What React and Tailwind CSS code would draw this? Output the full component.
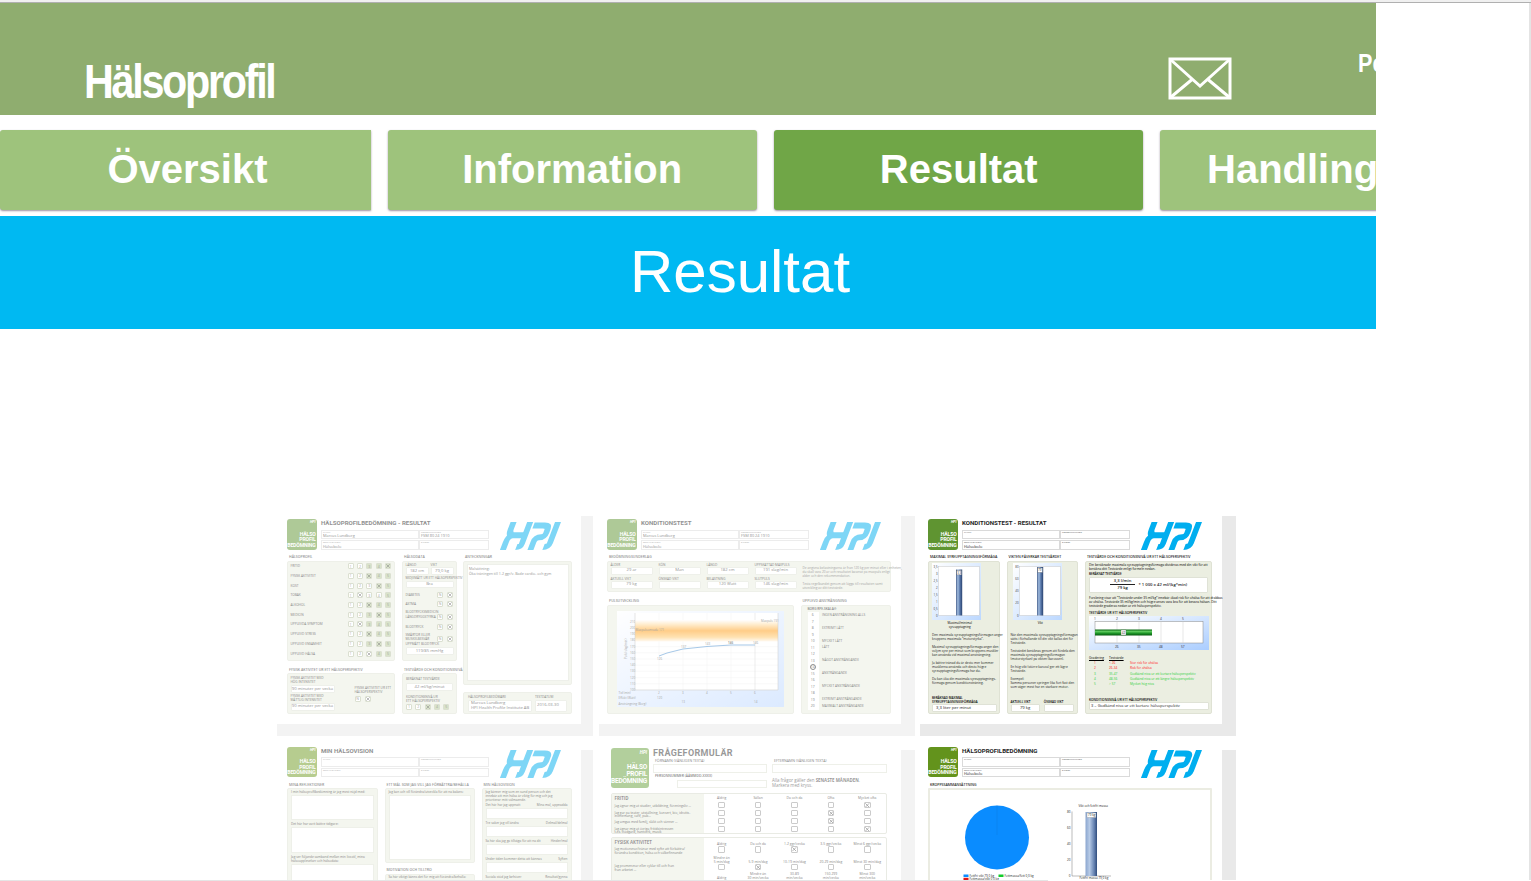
import React from "react";

const cx = (...parts) => parts.filter(Boolean).join(" ");

/* ---------- small building blocks ---------- */

const T = ({ className, children }) => (
  <div className={cx("h-[4px] shrink-0 whitespace-nowrap text-[3.2px] leading-[4px]", className)}>{children}</div>
);

const Head = ({ className, children }) => (
  <div className={cx("h-[5.5px] shrink-0 whitespace-nowrap pl-[2px] text-[3.5px] font-semibold leading-[4px] text-[#222]", className)}>
    {children}
  </div>
);

const Panel = ({ className, children }) => (
  <div className={cx("flex shrink-0 flex-col rounded-[2px] border border-[#dfe2d4] bg-[#ebeee1]", className)}>{children}</div>
);

const Value = ({ className, children }) => (
  <div className={cx("flex shrink-0 items-center justify-center whitespace-nowrap rounded-[1px] border-[0.5px] border-[#dfe2d6] bg-white text-[4.2px] leading-none text-[#222]", className)}>
    {children}
  </div>
);

const Cross = () => (
  <svg viewBox="0 0 8 8" className="h-full w-full">
    <path d="M0.6 0.6 7.4 7.4M7.4 0.6 0.6 7.4" stroke="#222" strokeWidth="1.2" fill="none" />
  </svg>
);

const Cell = ({ n, green, crossed }) => (
  <div
    className={cx(
      "flex h-[6px] w-[6px] shrink-0 items-center justify-center rounded-[1px] border border-[#b9c2a4] text-[3.5px] leading-none text-[#444]",
      green ? "bg-[#b4c896]" : "bg-white"
    )}
  >
    {crossed ? <Cross /> : n}
  </div>
);

const YesNo = ({ label, className }) => (
  <div className={cx("flex h-[6px] shrink-0 items-center justify-between pr-[3px]", className)}>
    <T>{label}</T>
    <div className="flex gap-[3.5px]">
      <Cell n="N" />
      <Cell crossed />
    </div>
  </div>
);

const HpiLogo = ({ className }) => (
  <svg viewBox="0 0 184 84" className={cx("h-[28px] w-[61px] shrink-0", className)} fill="none" stroke="#00aeef" strokeWidth="18">
    <g transform="translate(32 0) skewX(-21)">
      <path d="M9 0V22Q9 40 24 40H60M9 84V60Q9 40 26 40" />
      <path d="M59 0V66Q59 75 46 75" />
      <path d="M73 10H104Q120 10 120 22V32Q120 46 106 46H106Q92 46 92 60V84" />
      <path d="M143 0V64Q143 75 128 75" />
    </g>
  </svg>
);

const Badge = ({ className, text, mark, color }) => (
  <div className={cx("flex shrink-0 flex-col items-end rounded-[3px] font-['Roboto'] font-bold text-white", color, className)}>
    <div className={cx("italic leading-none", mark)}>HPI</div>
    <div className={cx("mt-auto text-right", text)}>
      <div>HÄLSO</div>
      <div>PROFIL</div>
      <div>BEDÖMNING</div>
    </div>
  </div>
);

const Field = ({ label, value, className }) => (
  <div className={cx("flex h-[9.5px] flex-col border-[0.5px] border-[#dadada] pl-[1px]", className)}>
    <div className="h-[3.5px] whitespace-nowrap text-[2.4px] leading-[3.5px] text-[#555]">{label}</div>
    <div className="whitespace-nowrap text-[3.9px] leading-[4px] text-[#222]">{value}</div>
  </div>
);

const DocHeader = ({ title, name, number, org, logo = "bg-[#5f9431]" }) => (
  <div className="flex h-[36px] shrink-0">
    <Badge className="h-[30.5px] w-[30px] px-[1.5px] pb-[1px] pt-[2px]" text="text-[5.1px] leading-[5.6px] tracking-[-0.15px]" mark="text-[3.5px]" color={logo} />
    <div className="ml-[4px] flex w-[168px] flex-col">
      <div className="h-[10.5px] whitespace-nowrap font-['Roboto'] text-[6.1px] font-bold leading-[7.5px] text-[#1d1d1d]">{title}</div>
      <div className="grid grid-cols-[98px_70px] gap-y-[1px]">
        <Field label="NAMN" value={name} />
        <Field label="PERSONNUMMER" value={number} />
        <Field label="ORGANISATION" value={org} />
        <Field label="E-POST" />
      </div>
    </div>
    <HpiLogo className="ml-[11px] mt-[3px]" />
  </div>
);

const Thumb = ({ faded, first, lower, children }) => (
  <div className={cx("flex h-[221px] w-[316px] shrink-0", faded && "opacity-50")}>
    <div className={cx("flex w-full flex-col", lower ? "pt-[7px]" : "pt-[0.5px]")}>
      <div className="w-full grow bg-[#e9e9e9]">
        <div className={cx("flex flex-col bg-white pt-[4px] font-['Open_Sans']", lower ? "-mt-[7px] h-[208px]" : "-mt-[0.5px] h-[208.5px]", first ? "w-[304px] pl-[10px]" : "w-[302px] pl-[8px]")}>
          {children}
        </div>
      </div>
    </div>
  </div>
);

/* ---------- document 1: result ---------- */

const profile = [
  ["FRITID", 5, 3],
  ["FYSISK AKTIVITET", 3, 3],
  ["KOST", 4, 4],
  ["TOBAK", 2, 5],
  ["ALKOHOL", 3, 3],
  ["MEDICIN", 4, 3],
  ["UPPLEVDA SYMPTOM", 2, 3],
  ["UPPLEVD STRESS", 3, 3],
  ["UPPLEVD ENSAMHET", 4, 3],
  ["UPPLEVD HÄLSA", 3, 4],
];

const DocResult = () => (
  <>
    <DocHeader title="HÄLSOPROFILBEDÖMNING - RESULTAT" name="Marcus Lundberg" number="FSM 80 24 1910" org="Hälsobolo" />
    <div className="flex">
      <div className="w-[108px]">
        <Head>HÄLSOPROFIL</Head>
        <Panel className="h-[100px] pl-[2.5px]">
          {profile.map(([label, mark, from]) => (
            <div key={label} className="flex h-[9.7px] shrink-0 items-center">
              <T className="w-[57px]">{label}</T>
              <div className="flex gap-[3.4px]">
                {[1, 2, 3, 4, 5].map((n) => (
                  <Cell key={n} n={n} green={n >= from} crossed={n === mark} />
                ))}
              </div>
            </div>
          ))}
        </Panel>
        <Head className="mt-[7px]">FYSISK AKTIVITET UR ETT HÄLSOPERSPEKTIV</Head>
        <Panel className="h-[40.5px] pl-[2.5px] pt-[2px]">
          <T>FYSISK AKTIVITET MED</T>
          <T>HÖG INTENSITET</T>
          <Value className="mt-[1px] h-[8px] w-[44px] text-[3.9px]">90 minuter per vecka</Value>
          <div className="flex">
            <div>
              <T className="mt-[1px]">FYSISK AKTIVITET MED</T>
              <T>MÅTTLIG INTENSITET</T>
              <Value className="mt-[0.5px] h-[8px] w-[44px] text-[3.9px]">90 minuter per vecka</Value>
            </div>
            <div className="-mt-[7px] ml-[20px]">
              <T className="text-[2.8px]">FYSISK AKTIVITET UR ETT</T>
              <T className="text-[2.8px]">HÄLSOPERSPEKTIV</T>
              <div className="mt-[2px] flex gap-[4px]">
                <Cell n="N" />
                <Cell crossed />
              </div>
            </div>
          </div>
        </Panel>
      </div>
      <div className="ml-[7px] w-[54.5px]">
        <Head>HÄLSODATA</Head>
        <Panel className="h-[100px] pl-[2.5px]">
          <div className="mt-[1px] flex gap-[2px]">
            <div className="w-[23px]">
              <T>LÄNGD</T>
              <Value className="mt-[0.5px] h-[7.5px]">182 cm</Value>
            </div>
            <div className="w-[23px]">
              <T>VIKT</T>
              <Value className="mt-[0.5px] h-[7.5px]">79,0 kg</Value>
            </div>
          </div>
          <T className="mt-[1px] text-[2.3px]">MIDJEMÅTT UR ETT HÄLSOPERSPEKTIV</T>
          <Value className="mt-[1px] h-[7.5px] w-[48px]">Bra</Value>
          <YesNo className="mt-[4px]" label="DIABETES" />
          <YesNo className="mt-[2.5px]" label="ASTMA" />
          <T className="mt-[3px]">BLODTRYCKSMEDICIN</T>
          <YesNo className="mt-[0.5px]" label="LÄNGDRYGGSTYRKA" />
          <YesNo className="mt-[3.5px]" label="BLODTRYCK" />
          <T className="mt-[3px]">SMÄRTOR ELLER</T>
          <YesNo className="-mt-[1px]" label="MUSKELBESVÄR" />
          <T>UPPMÄTT BLODTRYCK</T>
          <Value className="mt-[1.5px] h-[8px] w-[48px]">119/85 mmHg</Value>
        </Panel>
        <Head className="mt-[7px] pl-[1px] text-[2.7px]">TESTVÄRDE OCH KONDITIONSNIVÅ</Head>
        <Panel className="h-[40.5px] pl-[3px] pt-[3px]">
          <T>BERÄKNAT TESTVÄRDE</T>
          <Value className="mt-[2px] h-[8px] w-[47px]">42 ml/kg/minut</Value>
          <T className="mt-[3.5px]">KONDITIONSNIVÅ UR</T>
          <T>ETT HÄLSOPERSPEKTIV</T>
          <div className="mt-[1px] flex gap-[3.3px]">
            <Cell n={1} />
            <Cell n={2} />
            <Cell green crossed />
            <Cell green n={4} />
            <Cell green n={5} />
          </div>
        </Panel>
      </div>
      <div className="ml-[6.5px] w-[109px]">
        <Head>ANTECKNINGAR</Head>
        <Panel className="h-[124px] p-[2.5px]">
          <div className="grow border-[0.5px] border-[#dfe2d6] bg-white pl-[1.5px] pt-[1px] text-[3.6px] leading-[5px] text-[#222]">
            <div>Målsättning:</div>
            <div className="whitespace-nowrap">Öka träningen till 1-2 ggr/v. Både cardio- och gym</div>
          </div>
        </Panel>
        <Panel className="mt-[7px] h-[22px] px-[4px] pt-[2px]">
          <div className="flex gap-[3px]">
            <div className="w-[64px]">
              <T>HÄLSOPROFILBEDÖMARE</T>
              <Value className="mt-[1px] h-[12.5px] flex-col !items-start gap-[1px] pl-[2px] text-[3.6px]">
                <span>Marcus Lundberg</span>
                <span>HPI Health Profile Institute AB</span>
              </Value>
            </div>
            <div className="w-[32px]">
              <T>TESTDATUM</T>
              <Value className="mt-[1px] h-[12.5px] !items-start !justify-start pl-[1px] pt-[2px] text-[3.6px]">2016-03-30</Value>
            </div>
          </div>
        </Panel>
      </div>
    </div>
  </>
);

/* ---------- document 2: fitness test ---------- */

const testFields = [
  ["ÅLDER", "29 år"],
  ["KÖN", "Man"],
  ["LÄNGD", "182 cm"],
  ["UPPSKATTAD MAXPULS", "191 slag/min"],
  ["AKTUELL VIKT", "79 kg"],
  ["ÖNSKAD VIKT", ""],
  ["BELASTNING", "120 Watt"],
  ["SLUTPULS", "146 slag/min"],
];

const borg = {
  6: "INGEN ANSTRÄNGNING ALLS",
  8: "EXTREMT LÄTT",
  10: "MYCKET LÄTT",
  11: "LÄTT",
  13: "NÅGOT ANSTRÄNGANDE",
  15: "ANSTRÄNGANDE",
  17: "MYCKET ANSTRÄNGANDE",
  19: "EXTREMT ANSTRÄNGANDE",
  20: "MAXIMALT ANSTRÄNGANDE",
};

const PulseChart = () => (
  <svg viewBox="0 0 167 96" className="h-[96px] w-[167px]" fontSize="3" fill="#444">
    <defs>
      <linearGradient id="pulseBg" x1="0" y1="0" x2="1" y2="1">
        <stop offset="0" stopColor="#fff" />
        <stop offset="1" stopColor="#b9d6ff" />
      </linearGradient>
      <linearGradient id="pulseBand" x1="0" y1="0" x2="0" y2="1">
        <stop offset="0" stopColor="#fff" />
        <stop offset="0.2" stopColor="#ffdda0" />
        <stop offset="0.5" stopColor="#ff9c14" />
        <stop offset="0.8" stopColor="#ffc768" />
        <stop offset="1" stopColor="#fff6e6" />
      </linearGradient>
    </defs>
    <rect width="167" height="96" fill="url(#pulseBg)" />
    <rect x="18" y="2" width="143" height="77" fill="#fff" />
    {Array.from({ length: 12 }, (_, i) => (
      <g key={i}>
        <path d={`M18 ${79 - i * 6.2}H161`} stroke="#e6e6e6" strokeWidth="0.4" />
        <text x="13" y={80 - i * 6.2}>{100 + i * 10}</text>
      </g>
    ))}
    {[42, 66, 90, 114, 138].map((x, i) => (
      <g key={x}>
        <path d={`M${x} 2V79`} stroke={i === 4 ? "#aaa" : "#e6e6e6"} strokeWidth="0.4" />
        <text x={x - 1} y="82.5">{i + 2}</text>
      </g>
    ))}
    <rect x="18" y="9" width="143" height="21.5" fill="url(#pulseBand)" />
    <path d="M18 2V79H161V2" fill="none" stroke="#999" strokeWidth="0.5" />
    <path d="M42 45 50 42 66 38 90 35.5 114 34H138" fill="none" stroke="#3b86cc" strokeWidth="0.9" />
    <text x="18.5" y="19.5">Maxpulsområde 171</text>
    <text x="144" y="11">Maxpuls 191</text>
    <text x="40" y="49">126</text>
    <text x="64" y="36.5">137</text>
    <text x="88" y="33.5">143</text>
    <text x="111" y="32.5" fontWeight="bold">146</text>
    <text x="136" y="32.5">146</text>
    <text transform="translate(10 48) rotate(-90)">Puls (slag/min)</text>
    <text x="1.5" y="82.5">Tid (min)</text>
    <text x="1.5" y="88">Effekt (Watt)</text>
    <text x="40" y="88">120</text>
    <text x="1.5" y="93.5">Ansträngning (Borg)</text>
    <text x="64.5" y="92">13</text>
    <text x="137" y="92">14</text>
  </svg>
);

const DocTest = () => (
  <>
    <DocHeader title="KONDITIONSTEST" name="Marcus Lundberg" number="FSM 80 24 1910" org="Hälsobolo" />
    <Head>BEDÖMNINGSUNDERLAG</Head>
    <Panel className="h-[31px] w-[283.5px] !flex-row pl-[2.5px] pt-[1px]">
      <div className="grid w-[191px] grid-cols-[repeat(4,42px)] content-start gap-x-[6px] gap-y-[2px]">
        {testFields.map(([label, value]) => (
          <div key={label} className="h-[12px]">
            <T>{label}</T>
            <Value className="h-[8px]">{value}</Value>
          </div>
        ))}
      </div>
      <div className="ml-[1px] mt-[3px] w-[84px] text-[#444]">
        <T className="text-[2.1px]">De angivna belastningarna är från 120 kg per minut eller i enheten,</T>
        <T className="text-[2.1px]">du skall vara 20 år och resultatet baserat på maxpuls enligt</T>
        <T className="text-[2.1px]">ålder och den rekommendation.</T>
        <T className="mt-[4px] text-[2.1px]">Testa regelbundet genom att lägga till resultaten samt</T>
        <T className="text-[2.1px]">utveckling av ditt testvärde.</T>
      </div>
    </Panel>
    <div className="mt-[7.5px] flex">
      <div className="w-[187px]">
        <Head>PULSUTVECKLING</Head>
        <Panel className="h-[109.5px] pl-[8.5px] pt-[5.5px]">
          <PulseChart />
        </Panel>
      </div>
      <div className="ml-[6.5px] w-[90.5px]">
        <Head>UPPLEVD ANSTRÄNGNING</Head>
        <Panel className="h-[109.5px] pl-[6px] pt-[1.5px]">
          <T className="font-semibold">BORG RPE-SKALA®</T>
          <div className="mt-[0.5px] flex h-[98.5px] w-[78px] flex-col bg-[linear-gradient(90deg,#fff_11px,transparent_11px)]">
            {Array.from({ length: 15 }, (_, i) => i + 6).map((n) => (
              <div key={n} className="flex h-[6.5px] items-center">
                <div className={cx("ml-[2px] flex h-[6.5px] w-[6.5px] items-center justify-center text-[3.4px] leading-none", n === 14 && "rounded-full border border-[#222]")}>{n}</div>
                <T className="ml-[6px]">{borg[n]}</T>
              </div>
            ))}
          </div>
        </Panel>
      </div>
    </div>
  </>
);

/* ---------- document 3: fitness test result ---------- */

const ColumnChart = ({ id, ticks, top, label }) => (
  <svg viewBox="0 0 49 57" className="h-[57px] w-[49px] shrink-0" fontSize="2.8" fill="#333">
    <defs>
      <linearGradient id={`${id}Bg`} x1="0" y1="0" x2="1" y2="1">
        <stop offset="0" stopColor="#fff" />
        <stop offset="1" stopColor="#bcd8ff" />
      </linearGradient>
      <linearGradient id={`${id}Bar`}>
        <stop offset="0" stopColor="#49618c" />
        <stop offset="0.3" stopColor="#a2bde0" />
        <stop offset="0.6" stopColor="#5c7cae" />
        <stop offset="1" stopColor="#29426f" />
      </linearGradient>
    </defs>
    <rect width="49" height="57" fill={`url(#${id}Bg)`} />
    <rect x="6.5" y="3.5" width="41" height="49" fill="#fff" stroke="#bbb" strokeWidth="0.4" />
    {ticks.map((tick, i) => (
      <text key={tick} x="5.5" textAnchor="end" y={5 + (i * 48.5) / (ticks.length - 1)}>{tick}</text>
    ))}
    <rect x="24" y={top} width="6.2" height={52.5 - top} fill={`url(#${id}Bar)`} />
    <rect x="24.8" y={top + 1} width="4.6" height="4.4" fill="#fff" stroke="#555" strokeWidth="0.3" />
    <text x="25.2" y={top + 4.2}>{label}</text>
  </svg>
);

const LevelChart = () => (
  <svg viewBox="0 0 120 34" className="h-[34px] w-[120px] shrink-0" fontSize="3.2" fill="#333">
    <defs>
      <linearGradient id="levelBg" x1="0" y1="0" x2="1" y2="1">
        <stop offset="0" stopColor="#fff" />
        <stop offset="1" stopColor="#aacdff" />
      </linearGradient>
      <linearGradient id="levelBar" x1="0" y1="0" x2="0" y2="1">
        <stop offset="0" stopColor="#0b6a16" />
        <stop offset="0.35" stopColor="#5ecb5e" />
        <stop offset="0.6" stopColor="#1f9a2a" />
        <stop offset="1" stopColor="#07580f" />
      </linearGradient>
    </defs>
    <rect width="120" height="34" fill="url(#levelBg)" />
    <rect x="6" y="5.5" width="108" height="21.5" fill="#fff" stroke="#888" strokeWidth="0.5" />
    {[28, 50, 72, 94].map((x, i) => (
      <g key={x}>
        <path d={`M${x} 5.5V27`} stroke="#ccc" strokeWidth="0.5" />
        <text x={x - 2} y="31.5">{[26, 35, 48, 57][i]}</text>
      </g>
    ))}
    {[6, 28, 50, 72, 94].map((x, i) => (
      <text key={x} x={x - 1} y="4">{i + 1}</text>
    ))}
    <rect x="6" y="13.5" width="57" height="6" fill="url(#levelBar)" />
    <rect x="32" y="14" width="5" height="5" fill="#fff" stroke="#555" strokeWidth="0.3" />
    <text x="32.8" y="17.8">42</text>
  </svg>
);

const levels = [
  ["1", "< 26", "Stor risk för ohälsa", "text-[#ff2222]"],
  ["2", "26-34", "Risk för ohälsa", "text-[#ff2222]"],
  ["3", "35-47", "Godkänd nivå ur ett kortare hälsoperspektiv", "text-[#2fcf3c]"],
  ["4", "48-56", "Godkänd nivå ur ett längre hälsoperspektiv", "text-[#2fcf3c]"],
  ["5", "> 57", "Mycket hög nivå", "text-[#2fcf3c]"],
];

const Paragraphs = ({ blocks, className }) => (
  <div className={cx("flex flex-col gap-[4px]", className)}>
    {blocks.map((block) => (
      <div key={block[0]}>
        {block.map((line) => (
          <T key={line} className="text-[2.9px] text-[#222]">{line}</T>
        ))}
      </div>
    ))}
  </div>
);

const DocTestResult = () => (
  <>
    <DocHeader title="KONDITIONSTEST - RESULTAT" org="Hälsobolo" />
    <div className="flex">
      <div className="w-[71.5px]">
        <Head className="text-[2.9px]">MAXIMAL SYREUPPTAGNINGSFÖRMÅGA</Head>
        <Panel className="h-[153.5px] px-[3px] pt-[1px]">
          <ColumnChart id="oxygen" ticks={["3,5", "3", "2,5", "2", "1,5", "1", "0,5", "0"]} top={6.5} label="3,3" />
          <T className="mt-[1px] pr-[8px] text-center text-[3px]">Maximal/minimal</T>
          <T className="pr-[8px] text-center text-[3px]">syreupptagning</T>
          <Paragraphs
            className="mt-[4px] h-[61px]"
            blocks={[
              ["Den maximala syreupptagningsförmågan anger", "kroppens maximala ”motorstyrka”."],
              ["Maximal syreupptagningsförmåga anger den", "volym syre per minut som kroppens muskler", "kan använda vid maximal ansträngning."],
              ["Ju bättre tränad du är desto mer kommer", "musklerna använda och desto högre", "syreupptagningsförmåga har du."],
              ["Du kan öka din maximala syreupptagnings-", "förmåga genom konditionsträning."],
            ]}
          />
          <T className="mt-[2px] text-[3px] font-semibold">BERÄKNAD MAXIMAL</T>
          <T className="text-[2.8px] font-semibold">SYREUPPTAGNINGSFÖRMÅGA</T>
          <Value className="mt-[0.5px] h-[8px] w-[65px] !justify-start pl-[3px] text-[4.2px]">3,3 liter per minut</Value>
        </Panel>
      </div>
      <div className="ml-[7px] w-[71.5px]">
        <Head className="text-[2.9px]">VIKTEN PÅVERKAR TESTVÄRDET</Head>
        <Panel className="h-[153.5px] px-[3px] pt-[1px]">
          <div className="pl-[2px]">
            <ColumnChart id="weight" ticks={["80", "60", "40", "20", "0"]} top={4} label="79" />
          </div>
          <T className="mt-[1px] pr-[4px] text-center text-[3px]">Vikt</T>
          <Paragraphs
            className="mt-[8px] h-[61px]"
            blocks={[
              ["När den maximala syreupptagningsförmågan", "sätts i förhållande till din vikt kallas det för", "Testvärde."],
              ["Testvärdet beräknas genom att fördela den", "maximala syreupptagningsförmågan", "(motorstyrkan) på vikten (karossen)."],
              ["En hög vikt (större kaross) ger ett lägre", "Testvärde."],
              ["Exempel:", "Samma personer springer lika fort fast den", "som väger mest har en starkare motor."],
            ]}
          />
          <div className="mt-[6px] flex gap-[4px]">
            <div className="w-[30px]">
              <T className="text-[3px] font-semibold">AKTUELL VIKT</T>
              <Value className="mt-[0.5px] h-[8px] text-[4.2px]">79 kg</Value>
            </div>
            <div className="w-[31px]">
              <T className="text-[3px] font-semibold">ÖNSKAD VIKT</T>
              <Value className="mt-[0.5px] h-[8px]" />
            </div>
          </div>
        </Panel>
      </div>
      <div className="ml-[7px] w-[127px]">
        <Head className="text-[2.8px]">TESTVÄRDE OCH KONDITIONSNIVÅ UR ETT HÄLSOPERSPEKTIV</Head>
        <Panel className="h-[153.5px] px-[3px] pt-[1px]">
          <T className="text-[2.8px]">Din beräknade maximala syreupptagningsförmåga divideras med din vikt för att</T>
          <T className="text-[2.8px]">beräkna ditt Testvärde enligt formeln nedan.</T>
          <T className="mt-[1.5px] text-[3px] font-semibold">BERÄKNAT TESTVÄRDE</T>
          <Value className="mt-[1px] h-[15.5px] w-[119px] gap-[3px] text-[4.2px] font-semibold">
            <div className="flex flex-col items-center gap-[1px]">
              <span className="border-b border-[#222] px-[4px] pb-[0.5px]">3,3 l/min</span>
              <span>79 kg</span>
            </div>
            <span>* 1 000 = 42 ml/(kg*min)</span>
          </Value>
          <T className="mt-[3px] text-[2.45px]">Forskning visar att ”Testvärde under 35 ml/kg” innebär ökad risk för ohälsa för att drabbas</T>
          <T className="text-[2.45px]">av ohälsa. Testvärde 35 ml/kg/min och högre anses vara bra för att bevara hälsan. Ditt</T>
          <T className="text-[2.45px]">testvärde graderas nedan ur ett hälsoperspektiv.</T>
          <T className="mb-[1.5px] mt-[3px] text-[2.8px] font-semibold">TESTVÄRDE UR ETT HÄLSOPERSPEKTIV</T>
          <LevelChart />
          <div className="mt-[6px] grid grid-cols-[20px_21px_76px] gap-y-[1.2px]">
            <T className="text-[3.2px] underline">Gradering</T>
            <T className="text-[3.2px] underline">Testvärde</T>
            <T />
            {levels.map(([grade, range, text, color]) => (
              <React.Fragment key={grade}>
                <T className={cx("pl-[5px]", color)}>{grade}</T>
                <T className={color}>{range}</T>
                <T className={cx("text-[2.7px]", color)}>{text}</T>
              </React.Fragment>
            ))}
          </div>
          <T className="mt-[11.8px] text-[2.8px] font-semibold">KONDITIONSNIVÅ UR ETT HÄLSOPERSPEKTIV</T>
          <Value className="mt-[0.5px] h-[8px] w-[120px] !justify-start pl-[1px] text-[4px]">3 = Godkänd nivå ur ett kortare hälsoperspektiv</Value>
        </Panel>
      </div>
    </div>
  </>
);

/* ---------- document 4: health vision ---------- */

const Blank = ({ className }) => <div className={cx("shrink-0 border-[0.5px] border-[#dfe2d4] bg-white", className)} />;

const visionRows = [
  ["Det här har jag uppnått", "Mina mål, uppnådda"],
  ["Tre saker jag vill ändra", "Delmål/delmål"],
  ["Så här ska jag gå tillväga för att nå dit", "Hinder/mål"],
  ["Under tiden kommer detta att kännas", "Syften"],
  ["Sociala stöd jag behöver", "Resultat/gynna"],
];

const DocVision = () => (
  <>
    <DocHeader title="MIN HÄLSOVISION" logo="bg-[#6f9a22]" />
    <div className="flex">
      <div className="w-[91px]">
        <Head>MINA REFLEKTIONER</Head>
        <Panel className="h-[120px] px-[3px] pt-[0.5px]">
          <T>I min hälsoprofilbedömning är jag mest nöjd med:</T>
          <Blank className="mt-[1px] h-[25.5px]" />
          <T className="mt-[2px]">Det här har varit bättre tidigare:</T>
          <Blank className="mt-[1px] h-[25.5px]" />
          <T className="mt-[2px]">Jag ser följande samband mellan min livsstil, mina</T>
          <T>hälsoupplevelser och hälsodata:</T>
          <Blank className="mt-[1px] h-[25.5px]" />
        </Panel>
      </div>
      <div className="ml-[6.5px] w-[90px]">
        <Head>ETT MÅL SOM JAG VILL JAG FÖRBÄTTRA/BEHÅLLA</Head>
        <Panel className="h-[75px] px-[3px] pt-[0.5px]">
          <T>Jag kan och vill förändra/utveckla för att nå balans:</T>
          <Blank className="mt-[1px] h-[65px]" />
        </Panel>
        <Head className="mt-[5px]">MOTIVATION OCH TILLTRO</Head>
        <Panel className="h-[40px] px-[3px] pt-[0.5px]">
          <T>Så här viktigt känns det för mig att förändra/behålla:</T>
        </Panel>
      </div>
      <div className="ml-[7px] w-[90px]">
        <Head>MIN HÄLSOVISION</Head>
        <Panel className="h-[120px] px-[3px] pt-[0.5px]">
          <T className="text-[2.7px]">Jag känner mig som en sund person och det</T>
          <T className="text-[2.7px]">innebär att min hälsa är viktig för mig och jag</T>
          <T className="text-[2.7px]">prioriterar mitt välmående.</T>
          {visionRows.map(([left, right]) => (
            <div key={left} className="mt-[1.2px] shrink-0">
              <div className="flex justify-between">
                <T className="text-[2.9px]">{left}</T>
                <T className="text-[2.9px]">{right}</T>
              </div>
              <Blank className="mt-[1px] h-[11.8px]" />
            </div>
          ))}
        </Panel>
      </div>
    </div>
  </>
);

/* ---------- document 5: questionnaire ---------- */

const Box = ({ on }) => (
  <div className="h-[6.5px] w-[6.5px] rounded-[1px] border border-[#999] bg-white">{on && <Cross />}</div>
);

const Options = ({ labels, picked }) => (
  <div className="grid grid-cols-[repeat(5,36.4px)] justify-items-center">
    {labels.map((label) => (
      <T key={label} className="text-[3.4px]">{label}</T>
    ))}
    {labels.map((label, i) => (
      <Box key={label} on={i === picked} />
    ))}
  </div>
);

const freeTime = [
  [["Jag ägnar mig åt studier, utbildning, föreningsliv …"], 4],
  [["Jag går på teater, utställning, konsert, bio, idrotts-", "evenemang, café, pub…"], 3],
  [["Jag umgås med familj, släkt och vänner …"], 3],
  [["Jag ägnar mig åt övriga fritidsintressen", "t.ex. trädgård, hantverk, musik"], 4],
];

const DocForm = () => (
  <div className="ml-[3.5px] mt-[1.5px] flex flex-col">
    <div className="flex h-[45px]">
      <Badge className="h-[39.5px] w-[38.5px] px-[2px] pb-[2px] pt-[3px]" text="text-[6.5px] leading-[7.2px] tracking-[-0.2px]" mark="text-[4.5px]" color="bg-[#68a03c]" />
      <div className="ml-[4px] flex w-[234px] flex-col">
        <div className="h-[11px] whitespace-nowrap font-['Roboto'] text-[9px] font-bold leading-[10px] tracking-[0.35px] text-[#333]">FRÅGEFORMULÄR</div>
        <div className="flex gap-[5px]">
          <div className="w-[114px]">
            <T className="pl-[2px] text-[3.6px]">FÖRNAMN (VÄNLIGEN TEXTA)</T>
            <Blank className="mt-[0.5px] h-[9px]" />
            <div className="mt-[0.5px] flex items-start">
              <T className="mt-[1px] w-[60px] pl-[2px] text-[3.4px] font-semibold">PERSONNUMMER (ÅÅMMDD-XXXX)</T>
            </div>
            <Blank className="ml-[24px] mt-[1.5px] h-[8.5px]" />
          </div>
          <div className="w-[115px]">
            <T className="pl-[2px] text-[3.6px]">EFTERNAMN (VÄNLIGEN TEXTA)</T>
            <Blank className="mt-[0.5px] h-[9px]" />
            <div className="mt-[5px] whitespace-nowrap text-[4.4px] leading-[5px] text-[#333]">
              Alla frågor gäller den <b>SENASTE MÅNADEN</b>.
              <br />
              Markera med kryss.
            </div>
          </div>
        </div>
      </div>
    </div>
    <div className="flex h-[41px] w-[276px] shrink-0 rounded-[2px] border border-[#d5d8ca]">
      <div className="w-[92px] bg-[#ebeee1] pl-[3px] pt-[2px]">
        <div className="h-[6px] text-[4.4px] font-bold leading-[5px] text-[#333]">FRITID</div>
        {freeTime.map(([lines]) => (
          <div key={lines[0]} className="flex h-[8px] flex-col justify-center">
            {lines.map((line) => (
              <div key={line} className="h-[3.5px] whitespace-nowrap text-[3.3px] leading-[3.5px]">{line}</div>
            ))}
          </div>
        ))}
      </div>
      <div className="pt-[2px]">
        <div className="grid grid-cols-[repeat(5,36.4px)] justify-items-center gap-y-[1.5px]">
          {["Aldrig", "Sällan", "Då och då", "Ofta", "Mycket ofta"].map((label) => (
            <T key={label} className="text-[3.4px]">{label}</T>
          ))}
          {freeTime.flatMap(([lines, picked]) => [0, 1, 2, 3, 4].map((i) => <Box key={`${lines[0]}${i}`} on={i === picked} />))}
        </div>
      </div>
    </div>
    <div className="mt-[3px] flex h-[60px] w-[276px] shrink-0 rounded-[2px] border border-[#d5d8ca]">
      <div className="w-[92px] bg-[#ebeee1] pl-[3px] pt-[1.5px]">
        <div className="h-[7px] text-[4.4px] font-bold leading-[5px] text-[#333]">FYSISK AKTIVITET</div>
        <T className="text-[3.3px]">Jag motionerar/tränar med syfte att förbättra/</T>
        <T className="text-[3.3px]">förändra kondition, hälsa och välbefinnande</T>
        <T className="mt-[9px] text-[3.3px]">Jag promenerar eller cyklar till och från</T>
        <T className="text-[3.3px]">från arbetet …</T>
      </div>
      <div className="pt-[4px]">
        <Options labels={["Aldrig", "Då och då", "1-2 ggr/vecka", "3-5 ggr/vecka", "Minst 6 ggr/vecka"]} picked={2} />
        <T className="mt-[3px] w-[36.4px] text-center text-[3.4px]">Mindre än</T>
        <Options labels={["5 min/dag", "5-9 min/dag", "10-19 min/dag", "20-29 min/dag", "Minst 30 min/dag"]} picked={1} />
        <div className="mt-[2px] grid grid-cols-[repeat(5,36.4px)] justify-items-center">
          {["", "Mindre än", "30-89", "150-299", "Minst 300", "Aldrig", "30 min/vecka", "min/vecka", "min/vecka", "min/vecka"].map((label, i) => (
            <T key={i} className="text-[3.4px]">{label}</T>
          ))}
        </div>
      </div>
    </div>
  </div>
);

/* ---------- document 6: body composition ---------- */

const BodyCharts = () => (
  <svg viewBox="0 0 279 110" className="h-[110px] w-[279px] shrink-0" fontSize="3" fill="#222">
    <defs>
      <linearGradient id="bodyBar">
        <stop offset="0" stopColor="#8ba6cf" />
        <stop offset="0.35" stopColor="#b6cae6" />
        <stop offset="0.75" stopColor="#6683b2" />
        <stop offset="1" stopColor="#304c7c" />
      </linearGradient>
    </defs>
    <circle cx="67" cy="47.5" r="32" fill="#0a8cff" />
    <path d="M67 15.5V45" stroke="#0b79dc" strokeWidth="0.4" />
    <rect x="33.5" y="84.5" width="5" height="2.5" fill="#0a8cff" />
    <text x="39.5" y="87">Fettfri vikt 79,0 kg</text>
    <rect x="68.5" y="84.5" width="5" height="2.5" fill="#12cc2a" />
    <text x="74.5" y="87">Fettmassa/fett 0,0 kg</text>
    <rect x="33.5" y="87.8" width="5" height="2.5" fill="#e01515" />
    <text x="39.5" y="89.8">Fettmassa/vikt 0,0 kg</text>
    <text x="148.5" y="17">Vikt och fettfri massa</text>
    {["80", "60", "40", "20", "0"].map((tick, i) => (
      <text key={tick} x="140.5" textAnchor="end" y={23 + i * 15.9}>{tick}</text>
    ))}
    <path d="M142 21.5V86H181" fill="none" stroke="#777" strokeWidth="0.5" />
    <rect x="155.5" y="22" width="11.5" height="64" fill="url(#bodyBar)" />
    <rect x="157" y="23" width="9" height="4.5" fill="#fff" stroke="#777" strokeWidth="0.3" />
    <text x="158" y="26.3">79 kg</text>
    <text x="149.5" y="89">Fettfri massa 79,0 kg</text>
  </svg>
);

const DocBody = () => (
  <>
    <DocHeader title="HÄLSOPROFILBEDÖMNING" org="Hälsobolo" logo="bg-[#63931c]" />
    <Head>KROPPSSAMMANSÄTTNING</Head>
    <div className="flex h-[120px] w-[284px] shrink-0 flex-col rounded-[1px] border-[2.5px] border-[#ebece2] bg-white">
      <BodyCharts />
    </div>
  </>
);

/* ---------- page ---------- */

const Tab = ({ active, children, className }) => (
  <div className={cx("flex h-[80.5px] shrink-0 items-center rounded-[3px] text-[40px] font-bold leading-none text-white shadow-[0_1px_2px_rgba(90,70,100,0.6)]", active ? "bg-[#70a647]" : "bg-[#9ec37c]", className)}>
    <span className="-mt-[1.5px]">{children}</span>
  </div>
);

export default function App() {
  return (
    <div className="flex h-[881px] w-[1531px] flex-col overflow-hidden bg-white font-['Liberation_Sans',sans-serif]">
      <div className="h-[3px] shrink-0 border-b border-[#b0b0b0] bg-[#f0f0f0]" />
      <div className="flex h-[877px] shrink-0 flex-col overflow-hidden border-r-2 border-[#e4e4e4]">
        <div className="flex w-[1376px] shrink-0 flex-col overflow-hidden">
          <header className="flex h-[112px] bg-[#8fad6f] text-white">
            <div className="ml-[84px] mt-[54px] w-[192px]">
              <div className="inline-block origin-left scale-x-[0.86] whitespace-nowrap text-[48px] font-bold leading-[50px] tracking-[-2.65px]">Hälsoprofil</div>
            </div>
            <svg viewBox="0 0 64 43" className="ml-[892px] mt-[54px] h-[43px] w-[64px] shrink-0" fill="none" stroke="#fff" strokeWidth="3">
              <path d="M2 2H62V41H2Z" />
              <path d="M3 3 32 29 61 3M3 40 24 22.5M61 40 40 22.5" />
            </svg>
            <div className="ml-[126px] mt-[46px] w-[18px]">
              <div className="origin-left scale-x-[0.83] whitespace-nowrap text-[26px] font-bold leading-[28px]">Pe</div>
            </div>
          </header>
          <nav className="flex h-[100.5px] gap-[16.5px] pt-[14.5px]">
            <Tab className="w-[371px] justify-center rounded-r-none pl-[4px]">Översikt</Tab>
            <Tab className="w-[369.5px] justify-center">Information</Tab>
            <Tab active className="w-[369.5px] justify-center pl-[1px]">Resultat</Tab>
            <Tab className="w-[369.5px] pl-[47.5px]">Handling</Tab>
          </nav>
          <div className="flex h-[113px] items-center justify-center bg-[#00b9f2] pl-[104px] text-[60px] leading-none text-white">
            <h1>Resultat</h1>
          </div>
        </div>
        <main className="ml-[277px] mt-[186.5px] flex flex-col gap-y-[6.5px]">
          <div className="flex">
            <Thumb faded first><DocResult /></Thumb>
            <div className="w-[6px]" />
            <Thumb faded><DocTest /></Thumb>
            <div className="w-[5px]" />
            <Thumb><DocTestResult /></Thumb>
          </div>
          <div className="flex">
            <Thumb faded first lower><DocVision /></Thumb>
            <div className="w-[6px]" />
            <Thumb faded lower><DocForm /></Thumb>
            <div className="w-[5px]" />
            <Thumb lower><DocBody /></Thumb>
          </div>
        </main>
      </div>
      <div className="h-px w-[1048px] shrink-0 bg-[#e5e5e5]" />
    </div>
  );
}
